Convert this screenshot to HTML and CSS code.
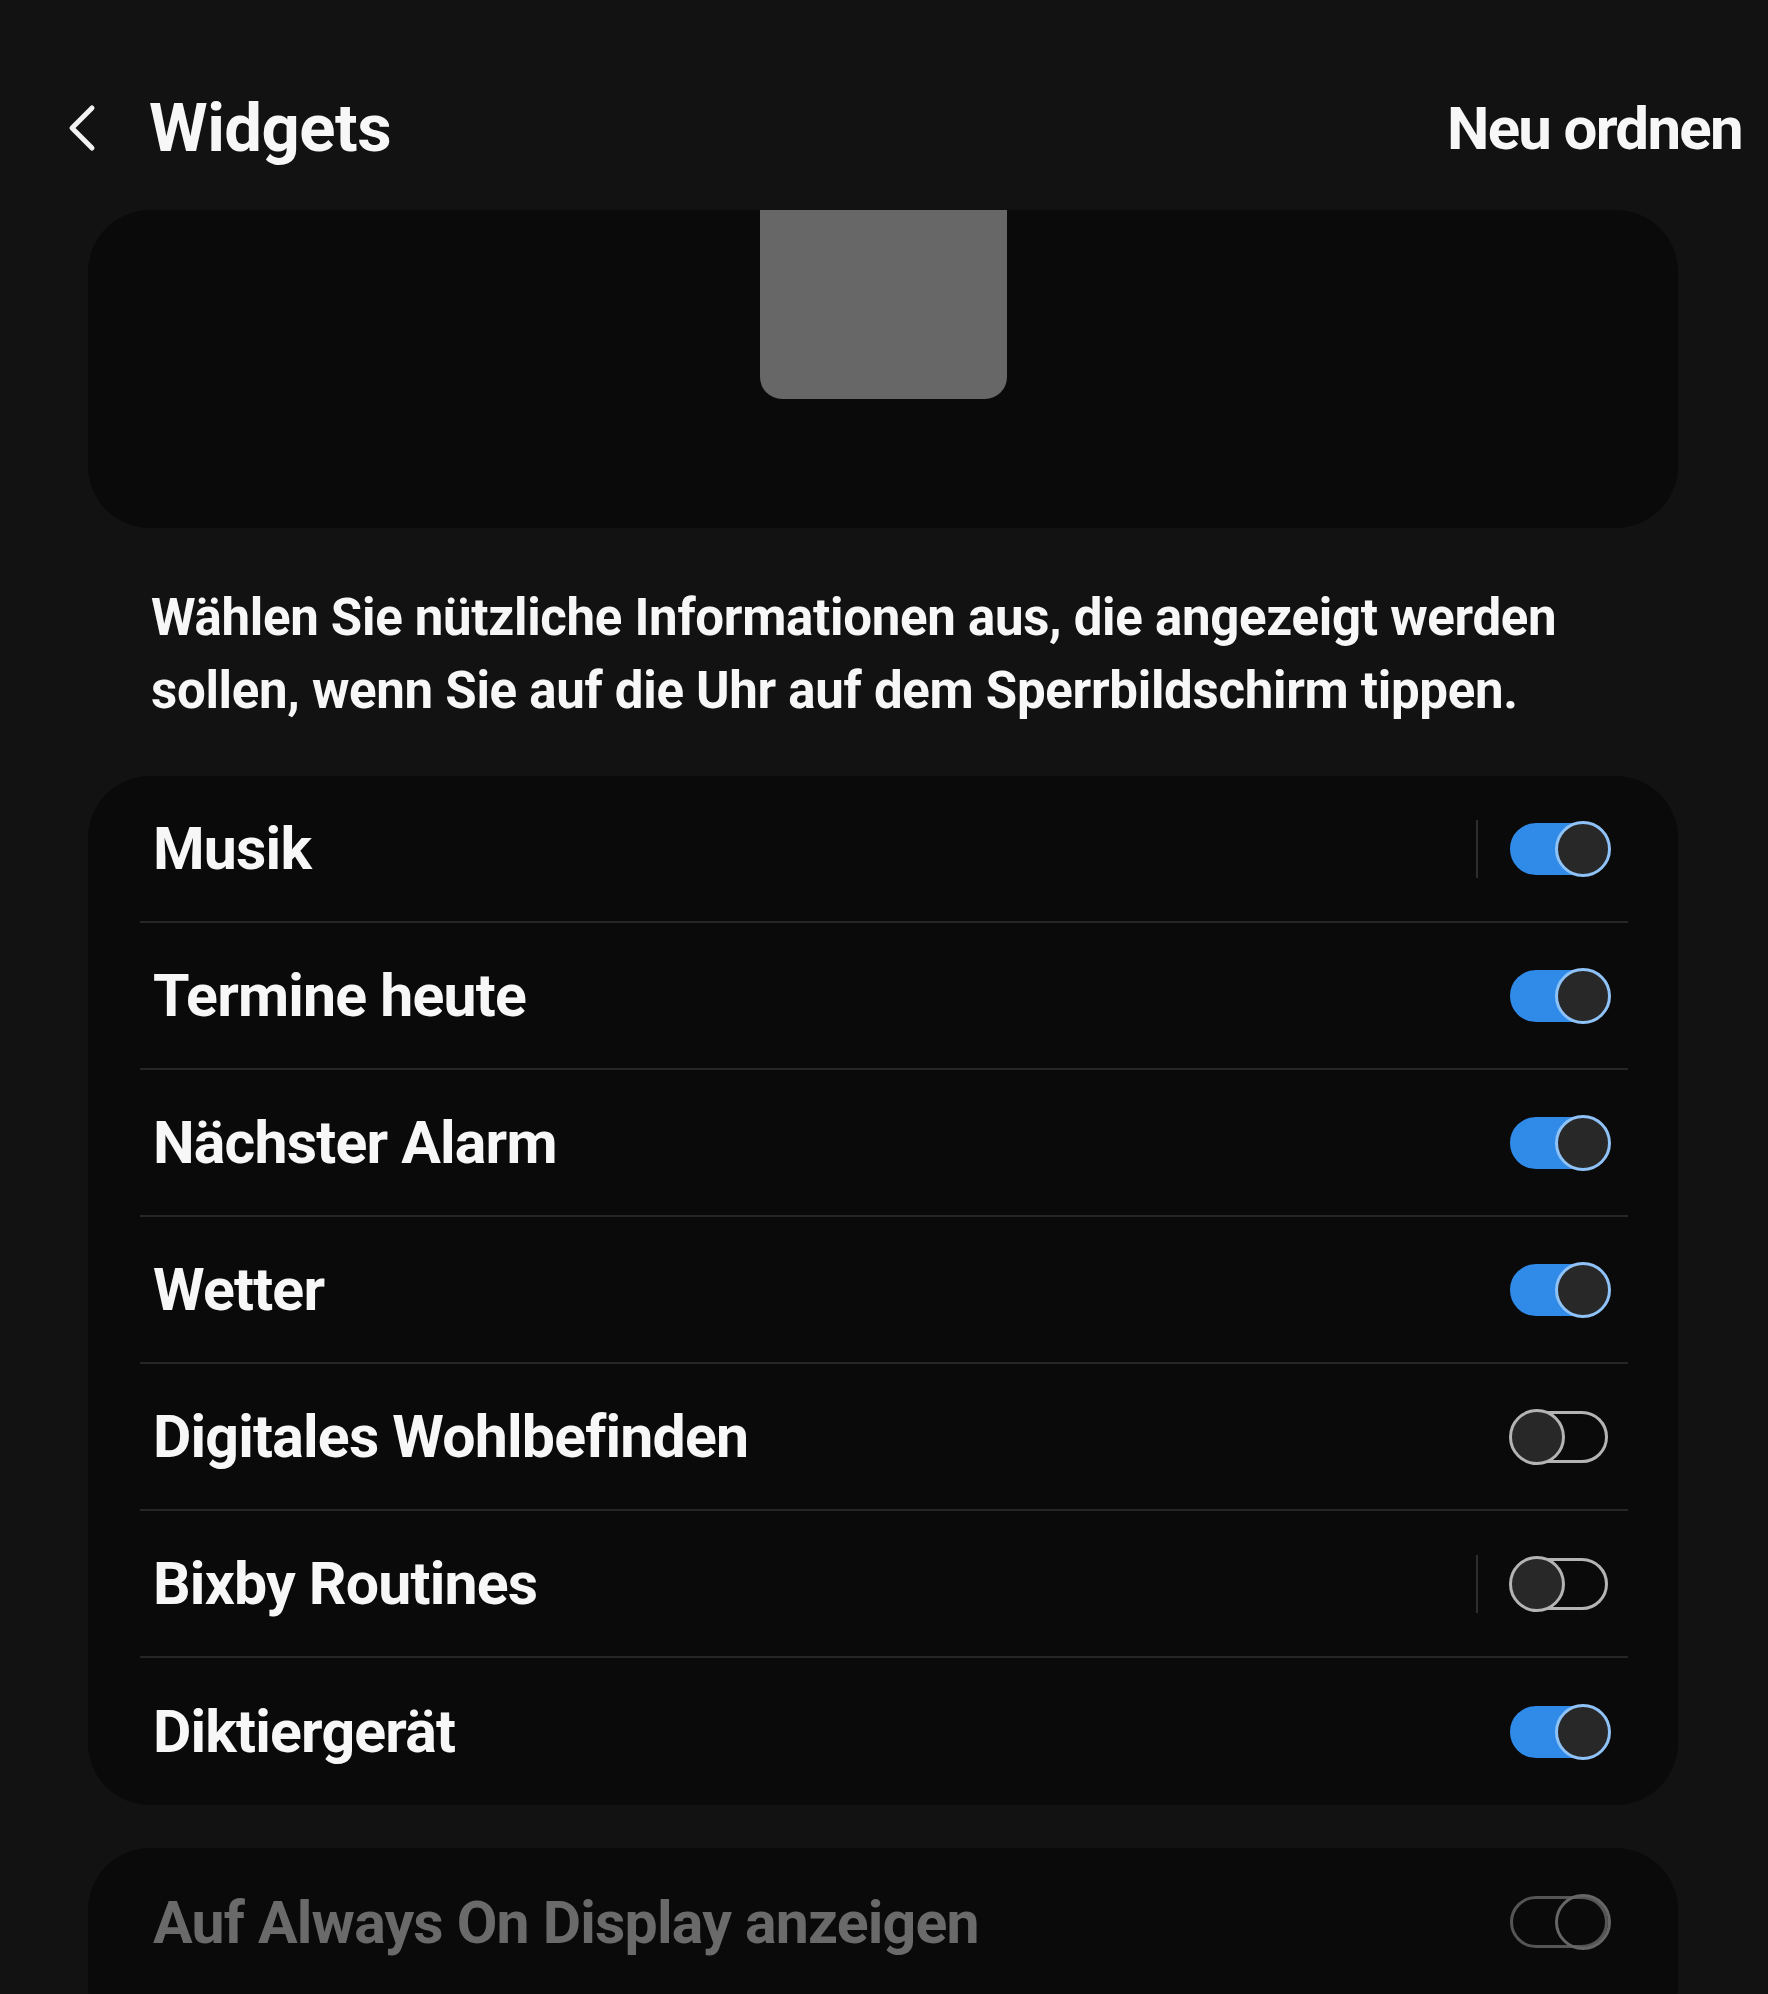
FILE: index.html
```html
<!DOCTYPE html>
<html lang="de">
<head>
  <meta charset="UTF-8" />
  <meta name="viewport" content="width=device-width, initial-scale=1.0" />
  <title>Widgets</title>
  <link rel="stylesheet" href="styles.css">
</head>
<body>

  <header class="topbar">
    <button class="back" aria-label="Zurück">
      <svg width="32" height="50" viewBox="0 0 32 50">
        <path d="M26 5 L6 25 L26 45" fill="none" stroke="#f2f2f2" stroke-width="5" stroke-linecap="round" stroke-linejoin="round"/>
      </svg>
    </button>
    <h1 class="title">Widgets</h1>
    <span class="action">Neu ordnen</span>
  </header>

  <!-- Vorschau -->
  <div class="preview">
    <div class="preview-block"></div>
  </div>

  <p class="hint">Wählen Sie nützliche Informationen aus, die angezeigt werden<br>sollen, wenn Sie auf die Uhr auf dem Sperrbildschirm tippen.</p>

  <!-- Liste der Widgets -->
  <div class="card list">
    <div class="row">
      <span class="label">Musik</span>
      <span class="sep"></span>
      <span class="switch on"><span class="knob"></span></span>
    </div>
    <div class="row">
      <span class="label">Termine heute</span>
      <span class="switch on"><span class="knob"></span></span>
    </div>
    <div class="row">
      <span class="label">Nächster Alarm</span>
      <span class="switch on"><span class="knob"></span></span>
    </div>
    <div class="row">
      <span class="label">Wetter</span>
      <span class="switch on"><span class="knob"></span></span>
    </div>
    <div class="row">
      <span class="label">Digitales Wohlbefinden</span>
      <span class="switch"><span class="knob"></span></span>
    </div>
    <div class="row">
      <span class="label">Bixby Routines</span>
      <span class="sep"></span>
      <span class="switch"><span class="knob"></span></span>
    </div>
    <div class="row">
      <span class="label">Diktiergerät</span>
      <span class="switch on"><span class="knob"></span></span>
    </div>
  </div>

  <div class="card aod">
    <div class="row">
      <span class="label">Auf Always On Display anzeigen</span>
      <span class="switch on disabled"><span class="knob"></span></span>
    </div>
  </div>

</body>
</html>
```

FILE: styles.css
```css
body {
  margin: 0;
  background: #121212;
  color: #f7f7f7;
  font-family: Roboto, "Noto Sans", sans-serif;
  font-weight: 700;
  overflow: hidden;
  height: 1994px;
}

/* Kopfzeile */
.topbar {
  height: 210px;
  box-sizing: border-box;
  padding: 46px 26px 0 66px;
  display: flex;
  align-items: center;
}

.back {
  background: none;
  border: 0;
  padding: 0;
  width: 32px;
  height: 50px;
  display: flex;
}

.title {
  margin: 0 0 0 51px;
  font-size: 67px;
  font-weight: 700;
  letter-spacing: -0.5px;
  flex: 1;
}

.action {
  font-size: 60px;
  letter-spacing: -1.7px;
}

/* Vorschau-Karte */
.preview {
  margin: 0 90px 0 88px;
  height: 318px;
  background: #0a0a0a;
  border-radius: 62px;
  display: flex;
  justify-content: center;
}

.preview-block {
  width: 247px;
  height: 189px;
  background: #676767;
  border-radius: 0 0 22px 22px;
}

.hint {
  margin: 53px 0 49px 151px;
  font-size: 51px;
  line-height: 73px;
  letter-spacing: -0.3px;
}

/* Listen */
.card {
  margin: 0 90px 0 88px;
  background: #0a0a0a;
  border-radius: 62px;
}

.row {
  height: 145px;
  margin: 0 50px 0 52px;
  padding: 0 17px 0 13px;
  display: flex;
  align-items: center;
  border-bottom: 2px solid #262626;
}

.row:last-child {
  border-bottom: 0;
  height: 147px;
}

.label {
  flex: 1;
  font-size: 59px;
  letter-spacing: -0.8px;
}

.sep {
  width: 2px;
  height: 58px;
  background: #2e2e2e;
  margin-right: 31px;
}

/* Schalter */
.switch {
  position: relative;
  width: 102px;
  height: 56px;
}

.switch::before {
  content: '';
  position: absolute;
  left: 1px;
  top: 2px;
  width: 98px;
  height: 52px;
  box-sizing: border-box;
  border-radius: 26px;
  border: 3px solid #b4b4b4;
}

.knob {
  position: absolute;
  left: 0;
  top: 0;
  width: 56px;
  height: 56px;
  box-sizing: border-box;
  border-radius: 50%;
  background: #282828;
  border: 3px solid #b4b4b4;
}

.switch.on::before {
  background: #2f8ae8;
  border-color: #2f8ae8;
}

.switch.on .knob {
  left: auto;
  right: 0;
  border-color: #8fc2f7;
}

.aod {
  margin-top: 43px;
  height: 200px;
}

.aod .row {
  height: 148px;
}

.aod .label {
  color: #6a6a6a;
}

.switch.disabled::before {
  background: transparent;
  border-color: #555555;
}

.switch.disabled .knob {
  background: transparent;
  border-color: #666666;
}
```
